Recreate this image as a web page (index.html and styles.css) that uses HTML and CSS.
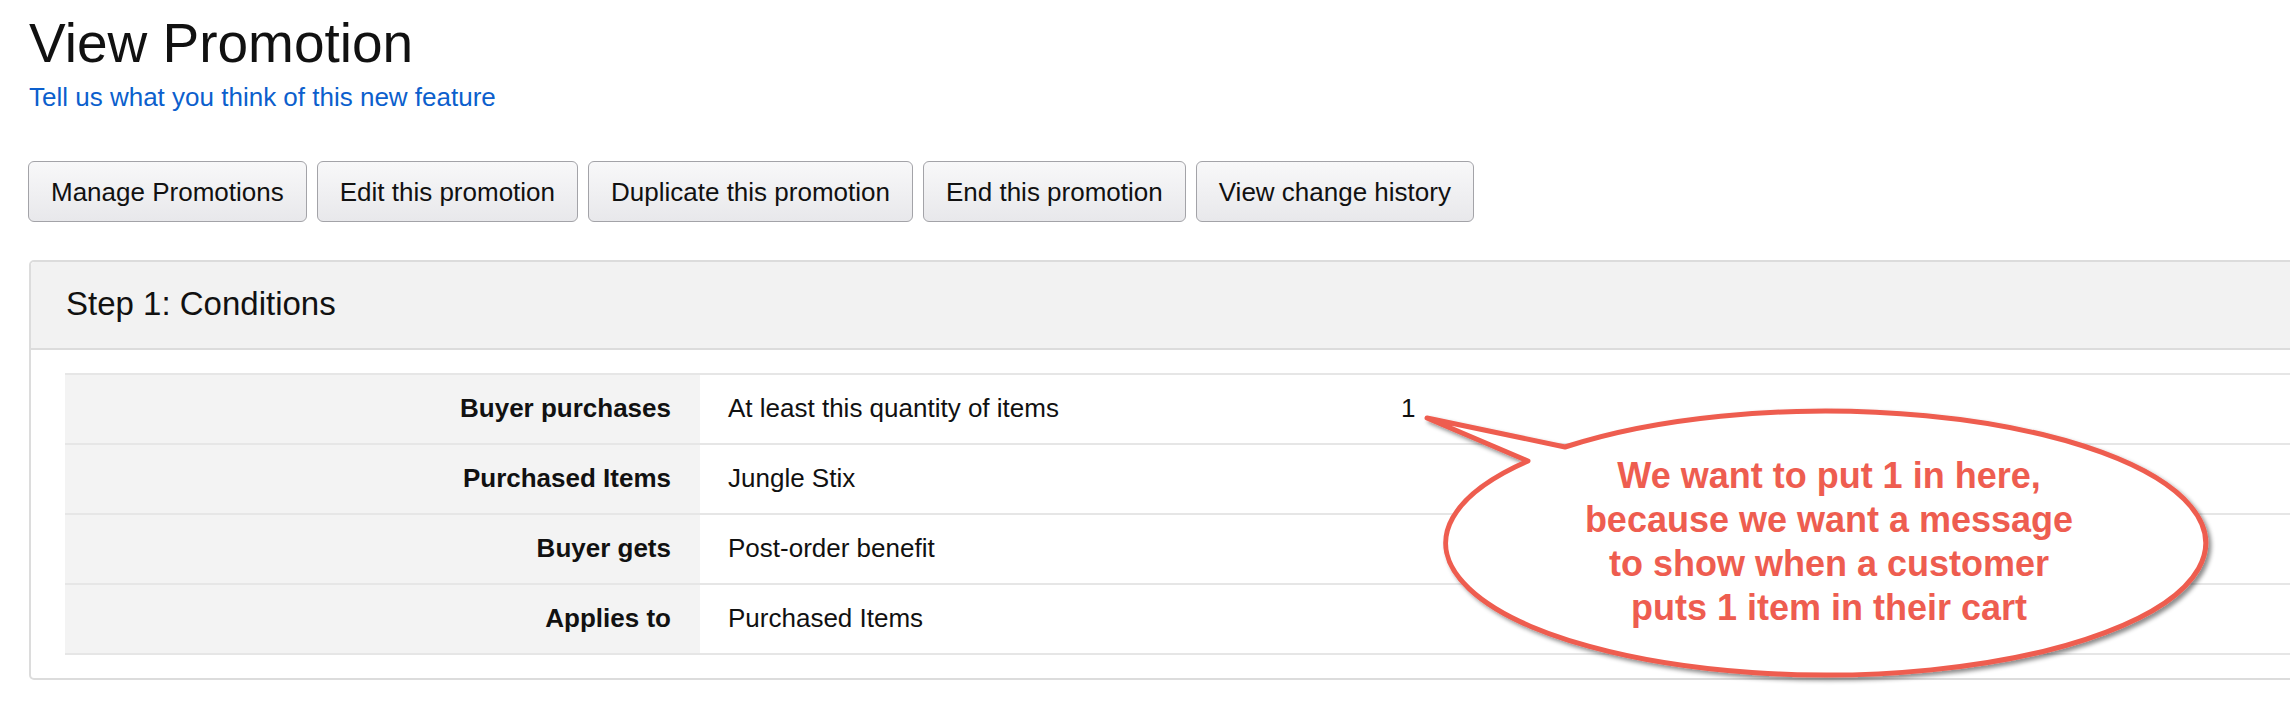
FILE: index.html
```html
<!DOCTYPE html>
<html>
<head>
<meta charset="utf-8">
<title>View Promotion</title>
<link rel="stylesheet" href="styles.css">
</head>
<body>
<div class="page">
  <h1 class="title">View Promotion</h1>
  <a class="feedback" href="#">Tell us what you think of this new feature</a>
  <div class="actions">
    <button class="btn">Manage Promotions</button>
    <button class="btn">Edit this promotion</button>
    <button class="btn">Duplicate this promotion</button>
    <button class="btn">End this promotion</button>
    <button class="btn">View change history</button>
  </div>
  <section class="panel">
    <div class="panel-head">Step 1: Conditions</div>
    <div class="panel-body">
      <div class="table">
        <div class="row">
          <div class="label">Buyer purchases</div>
          <div class="value"><span class="value-main">At least this quantity of items</span><span class="value-qty">1</span></div>
        </div>
        <div class="row">
          <div class="label">Purchased Items</div>
          <div class="value">Jungle Stix</div>
        </div>
        <div class="row">
          <div class="label">Buyer gets</div>
          <div class="value">Post-order benefit</div>
        </div>
        <div class="row">
          <div class="label">Applies to</div>
          <div class="value">Purchased Items</div>
        </div>
      </div>
    </div>
  </section>

  <div class="callout">
    <svg class="callout-shape" width="840" height="310" viewBox="0 0 840 310">
      <defs>
        <filter id="shadow" x="-10%" y="-10%" width="125%" height="130%">
          <feDropShadow dx="3" dy="3" stdDeviation="2" flood-color="#000" flood-opacity="0.45"/>
        </filter>
      </defs>
      <path d="M165 57 L27 28 L128 71 A380 132 0 1 0 165 57 Z" fill="#ffffff" stroke="#ee5d50" stroke-width="5" stroke-linejoin="round" filter="url(#shadow)"/>
    </svg>
    <div class="callout-text">We want to put 1 in here,<br>because we want a message<br>to show when a customer<br>puts 1 item in their cart</div>
  </div>
</div>
</body>
</html>
```

FILE: styles.css
```css
html, body {
  margin: 0;
  padding: 0;
  background: #ffffff;
  overflow: hidden;
}

body {
  font-family: "Liberation Sans", Arial, Helvetica, sans-serif;
  color: #111111;
}

.page {
  position: relative;
  padding: 16px 0 0 29px;
  height: 702px;
  box-sizing: border-box;
}

.title {
  margin: 0;
  font-size: 55px;
  line-height: 1;
  font-weight: normal;
  color: #111111;
}

.feedback {
  display: block;
  margin-top: 13px;
  font-size: 26px;
  line-height: 1;
  color: #0c5fcd;
  text-decoration: none;
}

.actions {
  display: flex;
  gap: 10px;
  margin-top: 51px;
  margin-left: -1px;
}

.btn {
  font-family: "Liberation Sans", Arial, Helvetica, sans-serif;
  font-size: 26px;
  line-height: 1;
  color: #111111;
  height: 61px;
  padding: 0 22px;
  border: 1px solid #a3a3a8;
  border-radius: 6px;
  background: linear-gradient(#f8f8f9, #e8e8eb);
  white-space: nowrap;
}

.panel {
  margin-top: 38px;
  margin-right: -40px;
  border: 2px solid #dcdcdc;
  border-radius: 5px;
}

.panel-head {
  background: #f2f2f2;
  border-bottom: 2px solid #dcdcdc;
  padding: 25px 35px 28px;
  font-size: 33px;
  line-height: 1;
  color: #111111;
  border-radius: 4px 4px 0 0;
}

.panel-body {
  padding: 23px 0 23px 34px;
}

.table {
  border-bottom: 2px solid #e6e6e6;
}

.row {
  display: grid;
  grid-template-columns: 635px 1fr;
  border-top: 2px solid #e6e6e6;
  font-size: 26px;
  line-height: 1;
}

.label {
  background: #f3f3f3;
  text-align: right;
  font-weight: bold;
  padding: 20px 29px 22px 0;
}

.value {
  display: flex;
  padding: 20px 0 22px 28px;
  background: #ffffff;
}

.value-main {
  width: 673px;
}

.callout {
  position: absolute;
  left: 1400px;
  top: 390px;
  width: 840px;
  height: 310px;
}

.callout-shape {
  position: absolute;
  left: 0;
  top: 0;
}

.callout-text {
  position: absolute;
  left: 129px;
  top: 64px;
  width: 600px;
  text-align: center;
  white-space: nowrap;
  font-size: 36px;
  line-height: 44px;
  font-weight: bold;
  color: #ee5d50;
}
```
